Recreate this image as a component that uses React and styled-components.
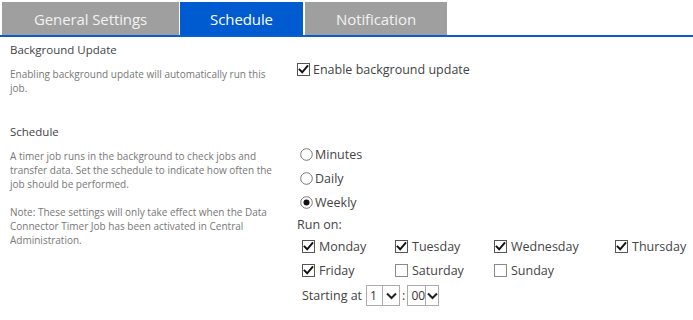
import React from "react";
import styled, { createGlobalStyle } from "styled-components";

const Global = createGlobalStyle`
  html, body { margin: 0; padding: 0; background: #fff; }
  body { font-family: "Open Sans", "Noto Sans", sans-serif; color: #444; }
`;

const Page = styled.div`
  width: 693px;
  height: 320px;
  overflow: hidden;
`;

const TabBar = styled.div`
  display: flex;
  gap: 1px;
  padding: 2px 0 0 2px;
  border-bottom: 2px solid #0a5ccf;
`;

const Tab = styled.div`
  width: ${(p) => p.$w}px;
  height: 33px;
  margin-right: ${(p) => p.$mr || 0}px;
  display: flex;
  align-items: center;
  justify-content: center;
  background: ${(p) => (p.$active ? "#005bd0" : "#9f9f9f")};
  color: ${(p) => (p.$active ? "#ffffff" : "#f2f2f2")};
  font-size: 15px;
  letter-spacing: -0.1px;
`;

const Section = styled.div`
  display: grid;
  grid-template-columns: 287px 1fr;
  padding-left: 10px;
  margin-top: ${(p) => p.$mt}px;
`;

const Left = styled.div`
  width: 272px;
`;

const Heading = styled.div`
  font-size: 11.5px;
  line-height: 16px;
  color: #444;
`;

const Desc = styled.p`
  margin: ${(p) => p.$mt || 0}px 0 0;
  font-size: 10px;
  line-height: 14px;
  color: #777;
`;

const Right = styled.div`
  padding-top: ${(p) => p.$pt || 0}px;
`;

const Row = styled.label`
  display: flex;
  align-items: center;
  height: ${(p) => p.$h || 24}px;
  padding-left: ${(p) => p.$pl || 0}px;
  font-size: 12.5px;
  color: #444;
`;

const Label = styled.span`
  margin-left: ${(p) => p.$ml || 4}px;
`;

const Days = styled.div`
  display: grid;
  grid-template-columns: 93px 99px 121px auto;
  padding-left: 5px;
`;

const Plain = styled.div`
  height: ${(p) => p.$h}px;
  display: flex;
  align-items: center;
  font-size: 12.5px;
  color: #444;
`;

const StartRow = styled.div`
  display: flex;
  align-items: center;
  height: 27px;
  padding-left: 5px;
  font-size: 12.5px;
  color: #444;
`;

const SelectBox = styled.div`
  display: flex;
  align-items: stretch;
  height: 21px;
  width: ${(p) => p.$w}px;
  margin-left: ${(p) => p.$ml || 0}px;
  border: 1px solid #ababab;
  box-sizing: border-box;
  background: #fff;
`;

const SelectValue = styled.div`
  flex: 1;
  display: flex;
  align-items: center;
  padding-left: 3px;
  font-size: 12px;
  color: #333;
`;

const SelectBtn = styled.div`
  width: 16px;
  border-left: 1px solid #ababab;
  display: flex;
  align-items: center;
  justify-content: center;
`;

const Colon = styled.span`
  margin: 0 2px;
`;

function CheckBox({ checked }) {
  return (
    <svg width="13" height="13" viewBox="0 0 13 13" style={{ flex: "none" }}>
      <rect x="0.5" y="0.5" width="12" height="12" fill="#fff" stroke={checked ? "#555" : "#8a8a8a"} />
      {checked && (
        <path d="M2.6 6.6 L5.2 9.3 L10.4 3.2" fill="none" stroke="#111" strokeWidth="2" strokeLinecap="square" />
      )}
    </svg>
  );
}

function Radio({ checked }) {
  return (
    <svg width="13" height="13" viewBox="0 0 13 13" style={{ flex: "none" }}>
      <circle cx="6.5" cy="6.5" r="5.8" fill="#fff" stroke="#777" />
      {checked && <circle cx="6.5" cy="6.5" r="3" fill="#111" />}
    </svg>
  );
}

function Chevron() {
  return (
    <svg width="11" height="8" viewBox="0 0 11 8">
      <path d="M1 1.5 L5.5 6 L10 1.5" fill="none" stroke="#222" strokeWidth="2" />
    </svg>
  );
}

function Select({ value, w, ml }) {
  return (
    <SelectBox $w={w} $ml={ml}>
      <SelectValue>{value}</SelectValue>
      <SelectBtn>
        <Chevron />
      </SelectBtn>
    </SelectBox>
  );
}

const days = [
  ["Monday", true],
  ["Tuesday", true],
  ["Wednesday", true],
  ["Thursday", true],
  ["Friday", true],
  ["Saturday", false],
  ["Sunday", false],
];

export default function App() {
  return (
    <Page>
      <Global />
      <TabBar>
        <Tab $w={177}>General Settings</Tab>
        <Tab $w={123} $active $mr={1}>Schedule</Tab>
        <Tab $w={142}>Notification</Tab>
      </TabBar>

      <Section $mt={5}>
        <Left>
          <Heading>Background Update</Heading>
          <Desc $mt={9}>Enabling background update will automatically run this job.</Desc>
        </Left>
        <Right $pt={18}>
          <Row $h={18}>
            <CheckBox checked />
            <Label $ml={3}>Enable background update</Label>
          </Row>
        </Right>
      </Section>

      <Section $mt={29}>
        <Left>
          <Heading>Schedule</Heading>
          <Desc $mt={9}>
            A timer job runs in the background to check jobs and transfer data. Set the schedule to indicate how
            often the job should be performed.
          </Desc>
          <Desc $mt={14}>
            Note: These settings will only take effect when the Data Connector Timer Job has been activated in
            Central Administration.
          </Desc>
        </Left>
        <Right $pt={18}>
          <Row $pl={3}>
            <Radio />
            <Label $ml={2}>Minutes</Label>
          </Row>
          <Row $pl={3}>
            <Radio />
            <Label $ml={2}>Daily</Label>
          </Row>
          <Row $pl={3}>
            <Radio checked />
            <Label $ml={2}>Weekly</Label>
          </Row>
          <Plain $h={20}>Run on:</Plain>
          <Days>
            {days.map(([d, c]) => (
              <Row key={d}>
                <CheckBox checked={c} />
                <Label $ml={4}>{d}</Label>
              </Row>
            ))}
          </Days>
          <StartRow>
            Starting at
            <Select value="1" w={34} ml={4} />
            <Colon>:</Colon>
            <Select value="00" w={32} />
          </StartRow>
        </Right>
      </Section>
    </Page>
  );
}
